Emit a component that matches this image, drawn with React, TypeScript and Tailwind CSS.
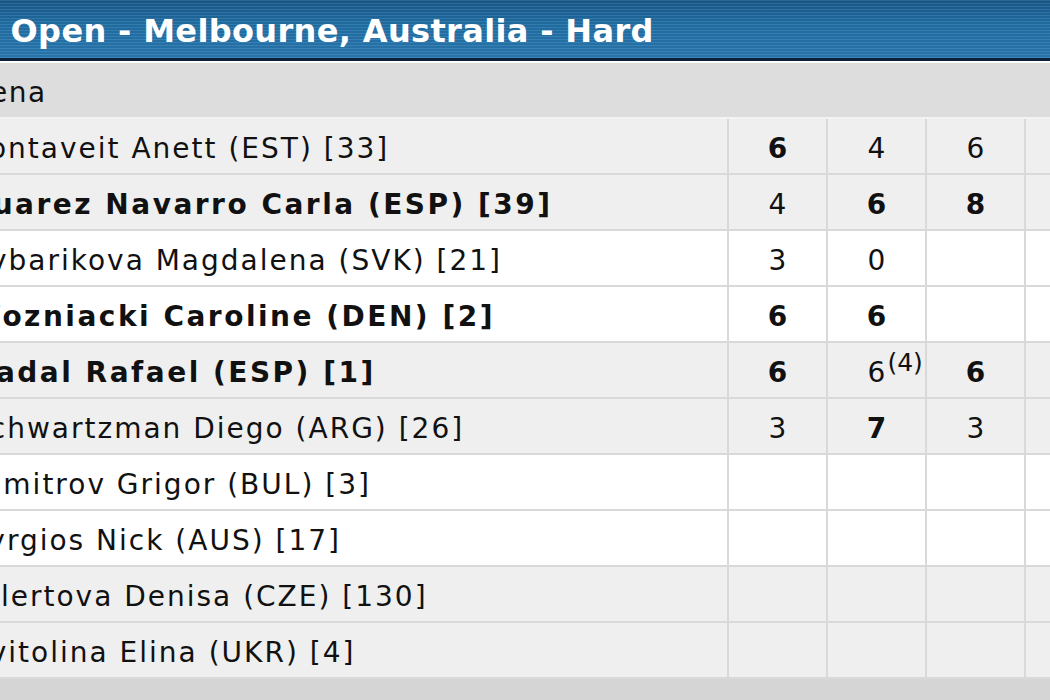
import React from "react";

type Score = { v: string; b?: boolean; sup?: string };
type Row = { name: string; bold?: boolean; white?: boolean; s: Score[] };

const rows: Row[] = [
  { name: "Kontaveit Anett (EST) [33]", s: [{ v: "6", b: true }, { v: "4" }, { v: "6" }, { v: "" }] },
  { name: "Suarez Navarro Carla (ESP) [39]", bold: true, s: [{ v: "4" }, { v: "6", b: true }, { v: "8", b: true }, { v: "" }] },
  { name: "Rybarikova Magdalena (SVK) [21]", white: true, s: [{ v: "3" }, { v: "0" }, { v: "" }, { v: "" }] },
  { name: "Wozniacki Caroline (DEN) [2]", bold: true, white: true, s: [{ v: "6", b: true }, { v: "6", b: true }, { v: "" }, { v: "" }] },
  { name: "Nadal Rafael (ESP) [1]", bold: true, s: [{ v: "6", b: true }, { v: "6", sup: "(4)" }, { v: "6", b: true }, { v: "" }] },
  { name: "Schwartzman Diego (ARG) [26]", s: [{ v: "3" }, { v: "7", b: true }, { v: "3" }, { v: "" }] },
  { name: "Dimitrov Grigor (BUL) [3]", white: true, s: [{ v: "" }, { v: "" }, { v: "" }, { v: "" }] },
  { name: "Kyrgios Nick (AUS) [17]", white: true, s: [{ v: "" }, { v: "" }, { v: "" }, { v: "" }] },
  { name: "Allertova Denisa (CZE) [130]", s: [{ v: "" }, { v: "" }, { v: "" }, { v: "" }] },
  { name: "Svitolina Elina (UKR) [4]", s: [{ v: "" }, { v: "" }, { v: "" }, { v: "" }] },
];

export default function App() {
  return (
    <div className="w-[1050px] h-[700px] overflow-hidden bg-[#d5d5d5] font-['DejaVu_Sans',_'Liberation_Sans',_sans-serif] text-[#111111]">
      {/* header */}
      <div className="h-[61px] border-b-[3px] border-[#0b2036] bg-[image:repeating-linear-gradient(180deg,rgba(255,255,255,0.08)_0px,rgba(255,255,255,0.08)_1px,rgba(0,0,0,0.06)_1px,rgba(0,0,0,0.06)_3px),linear-gradient(180deg,#1a598a_0%,#2170a7_40%,#2a7ab3_100%)] flex items-center overflow-hidden">
        <div className="-ml-[190px] pt-[4px] whitespace-nowrap text-white font-bold text-[32px] tracking-[0.35px] leading-none">
          Australian Open - Melbourne, Australia - Hard
        </div>
      </div>
      <div className="h-[58px] border-t-2 border-white border-b-2 border-b-[#f3f3f3] bg-[#dddddd] flex items-center overflow-hidden">
        <div className="-ml-[207px] pt-[6px] whitespace-nowrap text-[28px] tracking-[1.5px] leading-none">Rod Laver Arena</div>
      </div>
      {rows.map((r, i) => (
        <div
          key={i}
          className={`flex h-[56px] border-b-2 border-[#d9d9d9] ${r.white ? "bg-white" : "bg-[#efefef]"}`}
        >
          <div className="w-[727px] shrink-0 flex items-center overflow-hidden">
            <div
              className={`-ml-[30px] pt-[6px] whitespace-nowrap text-[28px] leading-none ${
                r.bold ? "font-bold tracking-[2.5px]" : "tracking-[2px]"
              }`}
            >
              {r.name}
            </div>
          </div>
          {r.s.map((sc, j) => (
            <div
              key={j}
              className="w-[99px] shrink-0 border-l-2 border-[#d9d9d9] flex items-center justify-center pt-[6px] text-[28px] leading-none"
            >
              <span className={`relative ${sc.b ? "font-bold" : ""}`}>
                {sc.v}
                {sc.sup && (
                  <span className="absolute left-[calc(100%+2px)] -top-[9px] text-[25px] font-normal">{sc.sup}</span>
                )}
              </span>
            </div>
          ))}
        </div>
      ))}
    </div>
  );
}
